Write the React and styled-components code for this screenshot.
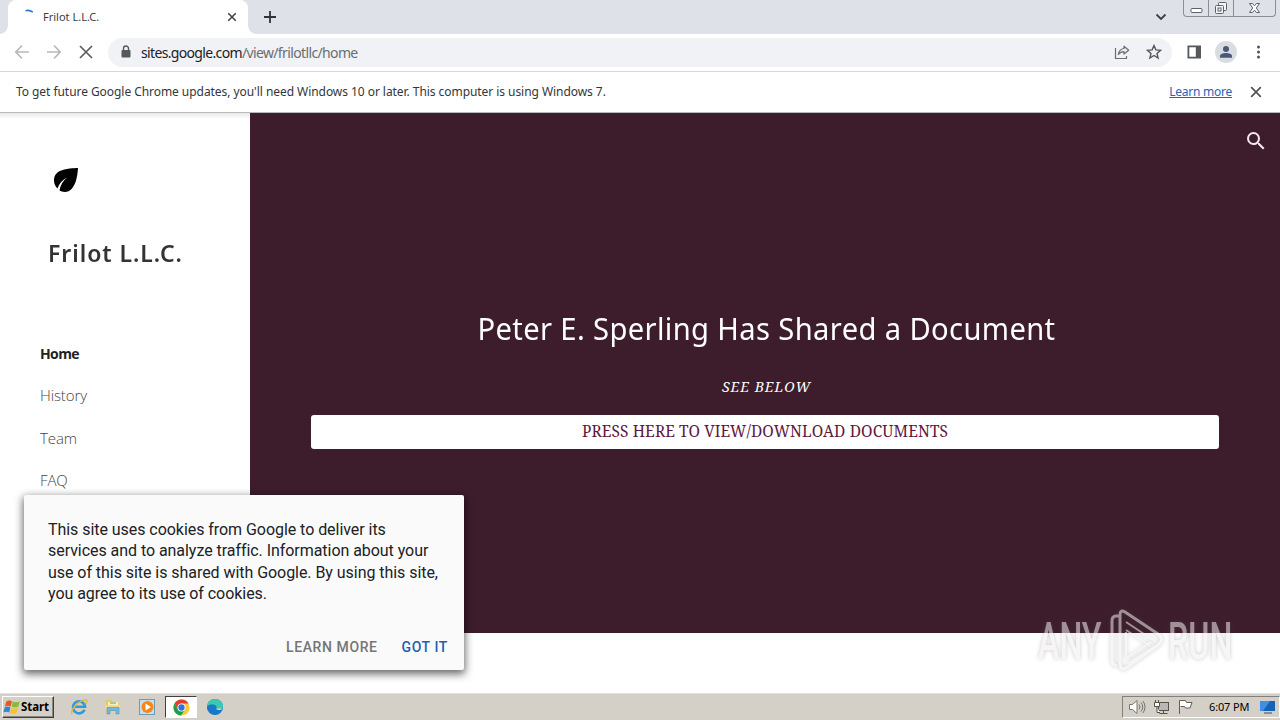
import React from "react";
import styled, { createGlobalStyle } from "styled-components";

const Global = createGlobalStyle`
  * { box-sizing: border-box; }
  body { margin: 0; background: #fff; overflow: hidden; }
`;

const ui = `"Noto Sans", "Open Sans", sans-serif`;

const Screen = styled.div`
  position: relative;
  width: 1280px;
  height: 720px;
  display: flex;
  flex-direction: column;
  background: #fff;
  overflow: hidden;
`;

/* Browser chrome */
const TabStrip = styled.header`
  display: flex;
  height: 34px;
  background: #dee1e8;
  padding-left: 8px;
`;
const Tab = styled.div`
  position: relative;
  display: flex;
  align-items: center;
  width: 240px;
  height: 34px;
  padding: 0 11px 0 15px;
  border-radius: 8px 8px 0 0;
  background: #fff;
  &::before, &::after {
    content: "";
    position: absolute;
    bottom: 0;
    width: 8px;
    height: 8px;
  }
  &::before { left: -8px; background: radial-gradient(circle at 0 0, transparent 7.5px, #fff 8px); }
  &::after { right: -8px; background: radial-gradient(circle at 100% 0, transparent 7.5px, #fff 8px); }
`;
const TabTitle = styled.span`
  flex: 1;
  margin-left: 4px;
  font: 11px/16px ${ui};
  color: #3c4043;
`;
const NewTab = styled.div`
  display: flex;
  align-items: center;
  padding-left: 15px;
  flex: 1;
`;
const TabSearch = styled.div`
  display: flex;
  align-items: center;
  margin-right: 16px;
`;
const WindowControls = styled.div`
  display: flex;
  width: 93px;
  height: 17px;
  margin-right: 4px;
  border: 1px solid #8b8e97;
  border-top: 0;
  border-radius: 0 0 4px 4px;
`;
const WindowButton = styled.div`
  display: flex;
  align-items: center;
  justify-content: center;
  width: ${(p) => p.$w}px;
  border-right: ${(p) => (p.$last ? "0" : "1px solid #8b8e97")};
`;

const Toolbar = styled.div`
  display: flex;
  align-items: center;
  height: 38px;
  padding: 0 13px 1px 14px;
  background: #fff;
  border-bottom: 1px solid #d5d7db;
`;
const NavIcons = styled.div`
  display: flex;
  gap: 16px;
  width: 94px;
`;
const AddressBar = styled.div`
  display: flex;
  align-items: center;
  width: 1064px;
  height: 29px;
  padding: 0 10px 0 10px;
  border-radius: 15px;
  background: #f0f2f5;
`;
const Url = styled.span`
  flex: 1;
  margin-left: 7px;
  padding-top: 1px;
  font: 14px/20px ${ui};
  letter-spacing: -0.63px;
  color: #6a6e73;
  b { font-weight: 400; color: #202124; letter-spacing: -0.66px; }
`;
const AddressIcons = styled.div`
  display: flex;
  gap: 16px;
`;
const ToolIcons = styled.div`
  display: flex;
  align-items: center;
  margin-left: 13px;
  gap: 12px;
`;
const Avatar = styled.div`
  display: flex;
  align-items: center;
  justify-content: center;
  width: 22px;
  height: 22px;
  border-radius: 50%;
  background: #d9dce1;
`;

const InfoBar = styled.div`
  display: flex;
  align-items: center;
  height: 41px;
  padding: 0 17px 0 16px;
  background: #fff;
  border-bottom: 1px solid #b8b9ba;
`;
const InfoText = styled.span`
  flex: 1;
  font: 12px/18px ${ui};
  letter-spacing: -0.055px;
  color: #333639;
`;
const InfoLink = styled.a`
  margin-right: 17px;
  font: 12px/18px ${ui};
  letter-spacing: -0.25px;
  color: #2a62b8;
  text-decoration: underline;
  text-underline-offset: 1px;
`;

/* Page */
const Page = styled.main`
  display: flex;
  height: 580px;
`;
const Sidebar = styled.aside`
  width: 250px;
  padding-top: 52px;
  background: linear-gradient(#e9e9e9, #fff 6px);
`;
const LogoBox = styled.div`
  height: 29px;
  padding-left: 51px;
`;
const SiteName = styled.h1`
  margin: 41px 0 0 48px;
  font: 600 24px/36px "Noto Sans", sans-serif;
  letter-spacing: 1px;
  color: #333;
  white-space: nowrap;
  transform: scaleX(0.957);
  transform-origin: 0 50%;
`;
const NavList = styled.nav`
  display: flex;
  flex-direction: column;
  margin: 62px 0 0 40px;
`;
const NavItem = styled.a`
  height: 42.3px;
  font: ${(p) => (p.$active ? "700 14px/42px" : "300 15px/40px")} "Open Sans", sans-serif;
  letter-spacing: ${(p) => (p.$active ? -0.6 : -0.1)}px;
  color: ${(p) => (p.$active ? "#222" : "#444")};
`;
const Hero = styled.section`
  display: flex;
  flex-direction: column;
  align-items: center;
  width: 1030px;
  height: 520px;
  background: #3d1d2b;
`;
const SearchRow = styled.div`
  display: flex;
  justify-content: flex-end;
  width: 100%;
  height: 192px;
  padding: 16px 12px 0 0;
`;
const HeroTitle = styled.h2`
  margin: 0 0 0 2px;
  font: 400 31px/46px "Noto Sans", sans-serif;
  letter-spacing: 0.4px;
  color: #fff;
  white-space: nowrap;
  transform: scaleX(0.94);
`;
const HeroNote = styled.p`
  margin: 25px 0 0 3px;
  font: italic 400 14px/22px "Noto Serif", "Liberation Serif", serif;
  letter-spacing: 1px;
  color: #fff;
`;
const HeroButton = styled.a`
  display: flex;
  justify-content: center;
  width: 908px;
  height: 34px;
  margin-top: 17px;
  border-radius: 3px;
  background: #fff;
`;
const HeroButtonLabel = styled.span`
  font: 400 15.5px/33px "Noto Serif", "Liberation Serif", serif;
  letter-spacing: 0.12px;
  color: #5e1740;
  white-space: nowrap;
`;

const CookieCard = styled.div`
  position: absolute;
  left: 24px;
  top: 495px;
  width: 440px;
  height: 175px;
  padding: 24px 16px 0 24px;
  border-radius: 2px;
  background: #fafafa;
  box-shadow: 0 3px 8px 1px rgba(0, 0, 0, 0.6);
`;
const CookieText = styled.p`
  margin: 0;
  font: 400 16px/21.33px Roboto, sans-serif;
  letter-spacing: -0.05px;
  color: #202124;
  white-space: nowrap;
`;
const CookieActions = styled.div`
  display: flex;
  justify-content: flex-end;
  gap: 24px;
  margin-top: 33px;
`;
const CookieAction = styled.a`
  font: 500 14px/21px Roboto, sans-serif;
  letter-spacing: 0.6px;
  color: ${(p) => p.$color};
`;

const Watermark = styled.div`
  position: absolute;
  left: 1038px;
  top: 608px;
  display: flex;
  align-items: center;
  height: 66px;
  opacity: 0.55;
  filter: drop-shadow(0 0 2px rgba(80, 80, 80, 0.55));
`;
const WatermarkWord = styled.span`
  width: ${(p) => p.$w}px;
  padding-top: 2px;
  font: 500 52px/66px Roboto, sans-serif;
  color: #f3eef1;
  white-space: nowrap;
  transform: scaleX(${(p) => p.$scale});
  transform-origin: 0 50%;
`;

/* Taskbar */
const Taskbar = styled.footer`
  display: flex;
  align-items: center;
  height: 27px;
  padding-left: 2px;
  background: #d4d0c8;
  border-top: 1px solid #e3e0da;
  font-family: ${ui};
`;
const StartButton = styled.div`
  display: flex;
  align-items: center;
  width: 52px;
  height: 22px;
  border: 1px solid;
  border-color: #fff #404040 #404040 #fff;
  box-shadow: inset -1px -1px #8a8780;
  font: 700 11.5px/18px ${ui};
  letter-spacing: -0.1px;
  color: #000;
`;
const QuickLaunch = styled.div`
  display: flex;
  flex: 1;
  align-items: center;
  margin-left: 9px;
  gap: 2px;
`;
const TaskIcon = styled.div`
  display: flex;
  align-items: center;
  justify-content: center;
  width: 32px;
  height: 22px;
  border: 1px solid;
  border-color: ${(p) => (p.$active ? "#404040 #fff #fff #404040" : "transparent")};
  background: ${(p) => (p.$active ? "#fff" : "transparent")};
`;
const Tray = styled.div`
  display: flex;
  align-items: center;
  width: 158px;
  height: 22px;
  padding-left: 5px;
  border: 1px solid;
  border-color: #808080 #fff #fff #808080;
`;
const TrayIcons = styled.div`
  display: flex;
  gap: 7px;
  width: 81px;
`;
const Clock = styled.span`
  width: 50px;
  font: 11px/18px ${ui};
  letter-spacing: -0.15px;
  color: #000;
  white-space: nowrap;
`;

const Cross = ({ size = 16, r = 5, w = 1.6, color = "#3c4043" }) => (
  <svg width={size} height={size} viewBox="-8 -8 16 16" stroke={color} strokeWidth={w}>
    <path d={`M${-r} ${-r}L${r} ${r}M${r} ${-r}L${-r} ${r}`} />
  </svg>
);
const Arrow = ({ flip }) => (
  <svg width="16" height="16" viewBox="0 0 16 16" fill="none" stroke="#b6b8bb" strokeWidth="1.7">
    <g transform={flip ? "translate(16 0) scale(-1 1)" : undefined}>
      <path d="M15 8H2M8 1.5L1.8 8L8 14.5" />
    </g>
  </svg>
);

const Share = () => (
  <svg width="16" height="16" viewBox="0 0 16 16" fill="none" stroke="#6a6d72" strokeWidth="1.2">
    <path d="M1.500 4v10.500h11V12" />
    <path d="M10 2.200L14.700 6.200L10 10V7.700C7.500 7.700 5.800 8.500 4.300 10.500C4.800 7 6.800 4.900 10 4.500Z" strokeLinejoin="round" />
  </svg>
);
const Star = () => (
  <svg width="16" height="16" viewBox="0 0 16 16" fill="none" stroke="#53565b" strokeWidth="1.4">
    <path d="M8 1.600l1.900 4.300 4.700.4-3.600 3.100 1.100 4.600L8 11.500 3.900 14 5 9.400 1.400 6.300l4.700-.4z" />
  </svg>
);

const Chrome = () => (
  <svg width="17" height="17" viewBox="0 0 20 20">
    <circle cx="10" cy="10" r="9.500" fill="#fcc934" />
    <path d="M1.800 5.200A9.500 9.500 0 0 1 18.200 5.300H10L5.900 12.400Z" fill="#e33b2e" />
    <path d="M1.800 5.200A9.500 9.500 0 0 0 9.500 19.500L14.100 12.400H5.900Z" fill="#1e9e4a" />
    <circle cx="10" cy="10" r="4.700" fill="#fff" />
    <circle cx="10" cy="10" r="3.700" fill="#2f72dc" />
  </svg>
);
const Explorer = () => (
  <svg width="18" height="18" viewBox="0 0 18 18" fill="none">
    <path d="M14.500 11.800A6 6 0 1 1 15 8.700H4.500" stroke="#319bd8" strokeWidth="2.600" />
    <path d="M2.300 15.800C-1 14 7 3.500 15 1.800C17.800 1.400 17 4.500 15.500 6" stroke="#e6b63a" strokeWidth="1.400" />
  </svg>
);
const Folder = () => (
  <svg width="18" height="18" viewBox="0 0 18 18">
    <path d="M2 2h5l1 2h7v9H2z" fill="#e7c866" />
    <path d="M4 4h10v6H4z" fill="#f6f1c6" />
    <path d="M1.500 7h14.500v5H1.500z" fill="#efd984" />
    <path d="M3 16V9.500h12V16h-3v-3.500H6V16z" fill="#70b9df" stroke="#4f91ba" strokeWidth=".6" />
    <path d="M6 5h6" stroke="#56a55b" />
  </svg>
);
const Player = () => (
  <svg width="18" height="18" viewBox="0 0 18 18">
    <rect x="1.500" y="1.500" width="15" height="15" fill="#c7dfed" stroke="#6d9ab4" />
    <circle cx="9.500" cy="9" r="6" fill="#f58718" />
    <path d="M7.500 5.500L13 9L7.500 12.500z" fill="#fff" />
  </svg>
);
const Edge = () => (
  <svg width="18" height="18" viewBox="0 0 18 18">
    <circle cx="9" cy="9" r="8" fill="#137cc9" />
    <path d="M1 9C1 4 5 1 9 1C14 1 17 4.500 17 8C17 10.500 15 12 12.500 12C10.500 12 10 11 10.500 10C11 8 9 6.500 6.500 6.500C4 6.500 2 8 1 9Z" fill="#3cc9b0" />
    <path d="M1 9C2 7 4 6.500 6 6.500C4.500 8.500 5 15 13 15.500A8 8 0 0 1 1 9Z" fill="#2174c5" />
    <path d="M10.500 10.500C10.500 12 13 12.500 15.500 11.500L16 10.500Z" fill="#d4d0c8" />
  </svg>
);
const WinFlag = () => (
  <svg width="18" height="18" viewBox="0 0 17 17">
    <path d="M3 3.500Q5.500 1.500 8.500 3L7.300 8Q4.500 6.500 1.800 8.200Z" fill="#ee5523" />
    <path d="M9.300 3.300Q12.500 5 15.800 3L14.500 8Q11.500 10 8.200 8.300Z" fill="#85bd3a" />
    <path d="M1.600 9Q4.300 7.300 7 8.900L5.900 13.800Q3.300 12 .3 13.800Z" fill="#2d88d0" />
    <path d="M7.900 9.200Q11 11 14.300 9L13 14Q10 15.800 6.700 14.100Z" fill="#f8c22d" />
  </svg>
);

const links = ["Home", "History", "Team", "FAQ"];

export default function App() {
  return (
    <Screen>
      <Global />
      <TabStrip>
        <Tab>
          <svg width="16" height="16" viewBox="0 0 16 16" fill="none" stroke="#2f78cd" strokeWidth="1.700">
            <path d="M2.500 1.700Q6.500 .5 9.800 3.200" />
          </svg>
          <TabTitle>Frilot L.L.C.</TabTitle>
          <Cross size={10} r={6} w={2.300} />
        </Tab>
        <NewTab>
          <svg width="14" height="14" viewBox="0 0 14 14" stroke="#303338" strokeWidth="1.800">
            <path d="M7 1v12M1 7h12" />
          </svg>
        </NewTab>
        <TabSearch>
          <svg width="12" height="8" viewBox="0 0 12 8" fill="none" stroke="#3c4043" strokeWidth="1.800">
            <path d="M1.500 1.500L6 6L10.500 1.500" />
          </svg>
        </TabSearch>
        <WindowControls>
          <WindowButton $w={25}>
            <svg width="13" height="16" viewBox="0 0 13 16" fill="#fff" stroke="#5c6068">
              <rect x="1" y="8.500" width="11" height="4" rx="1" />
            </svg>
          </WindowButton>
          <WindowButton $w={25}>
            <svg width="14" height="16" viewBox="0 0 14 16" fill="#f4f5f7" stroke="#5c6068">
              <rect x="4.500" y="2.500" width="8" height="8" rx="1" />
              <rect x="1.500" y="5.500" width="8" height="8" rx="1" />
              <rect x="4" y="8" width="3" height="3" />
            </svg>
          </WindowButton>
          <WindowButton $w={41} $last>
            <svg width="13" height="16" viewBox="0 0 13 16" fill="#fff" stroke="#5c6068">
              <path d="M1.500 3.500H4.500L6.500 5.800L8.500 3.500H11.500L8.300 8L11.500 12.500H8.500L6.500 10.200L4.500 12.500H1.500L4.700 8Z" />
            </svg>
          </WindowButton>
        </WindowControls>
      </TabStrip>

      <Toolbar>
        <NavIcons>
          <Arrow />
          <Arrow flip />
          <Cross r={6} w={1.700} color="#5a5d61" />
        </NavIcons>
        <AddressBar>
          <svg width="16" height="16" viewBox="0 0 16 16">
            <rect x="3.500" y="6" width="9" height="7.500" rx="1" fill="#55585d" />
            <path d="M5.500 6V4.500a2.500 2.500 0 0 1 5 0V6" fill="none" stroke="#55585d" strokeWidth="1.400" />
          </svg>
          <Url><b>sites.google.com</b>/view/frilotllc/home</Url>
          <AddressIcons><Share /><Star /></AddressIcons>
        </AddressBar>
        <ToolIcons>
          <svg width="18" height="16" viewBox="0 0 18 16">
            <path d="M2.500 1.500h13.500v13H2.500zM4.300 3.300v9.400h6.500V3.300z" fill="#55585d" fillRule="evenodd" />
          </svg>
          <Avatar>
            <svg width="14" height="14" viewBox="0 0 14 14" fill="#4a5975">
              <circle cx="7" cy="4" r="3" />
              <path d="M1 12.800V11C1 8.800 5 8 7 8s6 .8 6 3v1.800z" />
            </svg>
          </Avatar>
          <svg width="18" height="16" viewBox="0 0 18 16" fill="#505358">
            <circle cx="9.500" cy="3" r="1.500" /><circle cx="9.500" cy="8" r="1.500" /><circle cx="9.500" cy="13" r="1.500" />
          </svg>
        </ToolIcons>
      </Toolbar>

      <InfoBar>
        <InfoText>To get future Google Chrome updates, you'll need Windows 10 or later. This computer is using Windows 7.</InfoText>
        <InfoLink>Learn more</InfoLink>
        <Cross size={14} r={5.500} w={1.900} color="#505256" />
      </InfoBar>

      <Page>
        <Sidebar>
          <LogoBox>
            <svg width="29" height="29" viewBox="0 0 29 29">
              <path d="M27 3C17 3.500 3 4 3 15.500C3 19 4.500 21.500 6.500 23.500C8 19 11 15 16 12.500C12 16 9.300 20 8.500 25.500C11.500 27.500 17.500 28 21 23.500C25.500 18 26.500 10 27 3Z" fill="#000" />
            </svg>
          </LogoBox>
          <SiteName>Frilot L.L.C.</SiteName>
          <NavList>
            {links.map((label, i) => <NavItem key={label} $active={i === 0}>{label}</NavItem>)}
          </NavList>
        </Sidebar>
        <Hero>
          <SearchRow>
            <svg width="24" height="24" viewBox="0 0 24 24" fill="#f4e9ef">
              <path d="M15.500 14h-.79l-.28-.27A6.471 6.471 0 0 0 16 9.500 6.500 6.500 0 1 0 9.500 16c1.610 0 3.090-.59 4.230-1.570l.27.28v.79l5 4.990L20.490 19l-4.990-5zm-6 0C7.010 14 5 11.990 5 9.500S7.010 5 9.500 5 14 7.010 14 9.500 11.990 14 9.500 14z" />
            </svg>
          </SearchRow>
          <HeroTitle>Peter E. Sperling Has Shared a Document</HeroTitle>
          <HeroNote>SEE BELOW</HeroNote>
          <HeroButton>
            <HeroButtonLabel>PRESS HERE TO VIEW/DOWNLOAD DOCUMENTS</HeroButtonLabel>
          </HeroButton>
        </Hero>
      </Page>

      <Taskbar>
        <StartButton><WinFlag />Start</StartButton>
        <QuickLaunch>
          <TaskIcon><Explorer /></TaskIcon>
          <TaskIcon><Folder /></TaskIcon>
          <TaskIcon><Player /></TaskIcon>
          <TaskIcon $active><Chrome /></TaskIcon>
          <TaskIcon><Edge /></TaskIcon>
        </QuickLaunch>
        <Tray>
          <TrayIcons>
            <svg width="18" height="18" viewBox="0 0 18 18" fill="#fff" stroke="#77746e">
              <path d="M1.500 6.500h3L9 2.500v13L4.500 11.500h-3z" />
              <path d="M11 6.500q2 2.500 0 5M13 4.500q3.500 4.500 0 9M15 3q4 6 0 12" fill="none" />
            </svg>
            <svg width="17" height="18" viewBox="0 0 17 18" fill="#fff" stroke="#55524d">
              <rect x="5.500" y="4.500" width="10" height="8" fill="#b9b7b3" />
              <path d="M10.500 13v2.500M6.500 15.500h8" />
              <path d="M1.500 4.500h5v4h-5zM2.500 2v2M5.500 2v2M4 9v5.500h3" />
            </svg>
            <svg width="17" height="18" viewBox="0 0 17 18" fill="#fff" stroke="#625f5a">
              <path d="M2.500 16V2.500H8.500L9.500 4.500H15L13 10H8.500L7.500 8.500H3.500" />
            </svg>
          </TrayIcons>
          <Clock>6:07 PM</Clock>
          <svg width="17" height="16" viewBox="0 0 17 16">
            <rect x="1" y="2" width="15" height="10" fill="#1762b9" />
            <path d="M1 2h10L4 12H1z" fill="#3d91de" />
            <path d="M5 14h8" stroke="#66778b" strokeWidth="1.500" />
          </svg>
        </Tray>
      </Taskbar>

      <CookieCard>
        <CookieText>
          This site uses cookies from Google to deliver its<br />
          services and to analyze traffic. Information about your<br />
          use of this site is shared with Google. By using this site,<br />
          you agree to its use of cookies.
        </CookieText>
        <CookieActions>
          <CookieAction $color="#757575">LEARN MORE</CookieAction>
          <CookieAction $color="#1a5fb4">GOT IT</CookieAction>
        </CookieActions>
      </CookieCard>

      <Watermark>
        <WatermarkWord $w={70} $scale={0.62}>ANY</WatermarkWord>
        <svg width="60" height="66" viewBox="0 0 60 66" fill="none" stroke="#f3eef1" strokeWidth="3">
          <path d="M12 8H8Q4 8 4 13V52Q4 57 9 58" />
          <path d="M12 57V7Q12 1 17 4L50 26Q57 31 50 37L18 60Q13 63 12 57Z" />
          <path d="M18 14L48 34M18 22L42 38M18 50L43 34M19 56L48 38M18 24V48" strokeWidth="2" />
        </svg>
        <WatermarkWord $w={66} $scale={0.62}>RUN</WatermarkWord>
      </Watermark>
    </Screen>
  );
}
